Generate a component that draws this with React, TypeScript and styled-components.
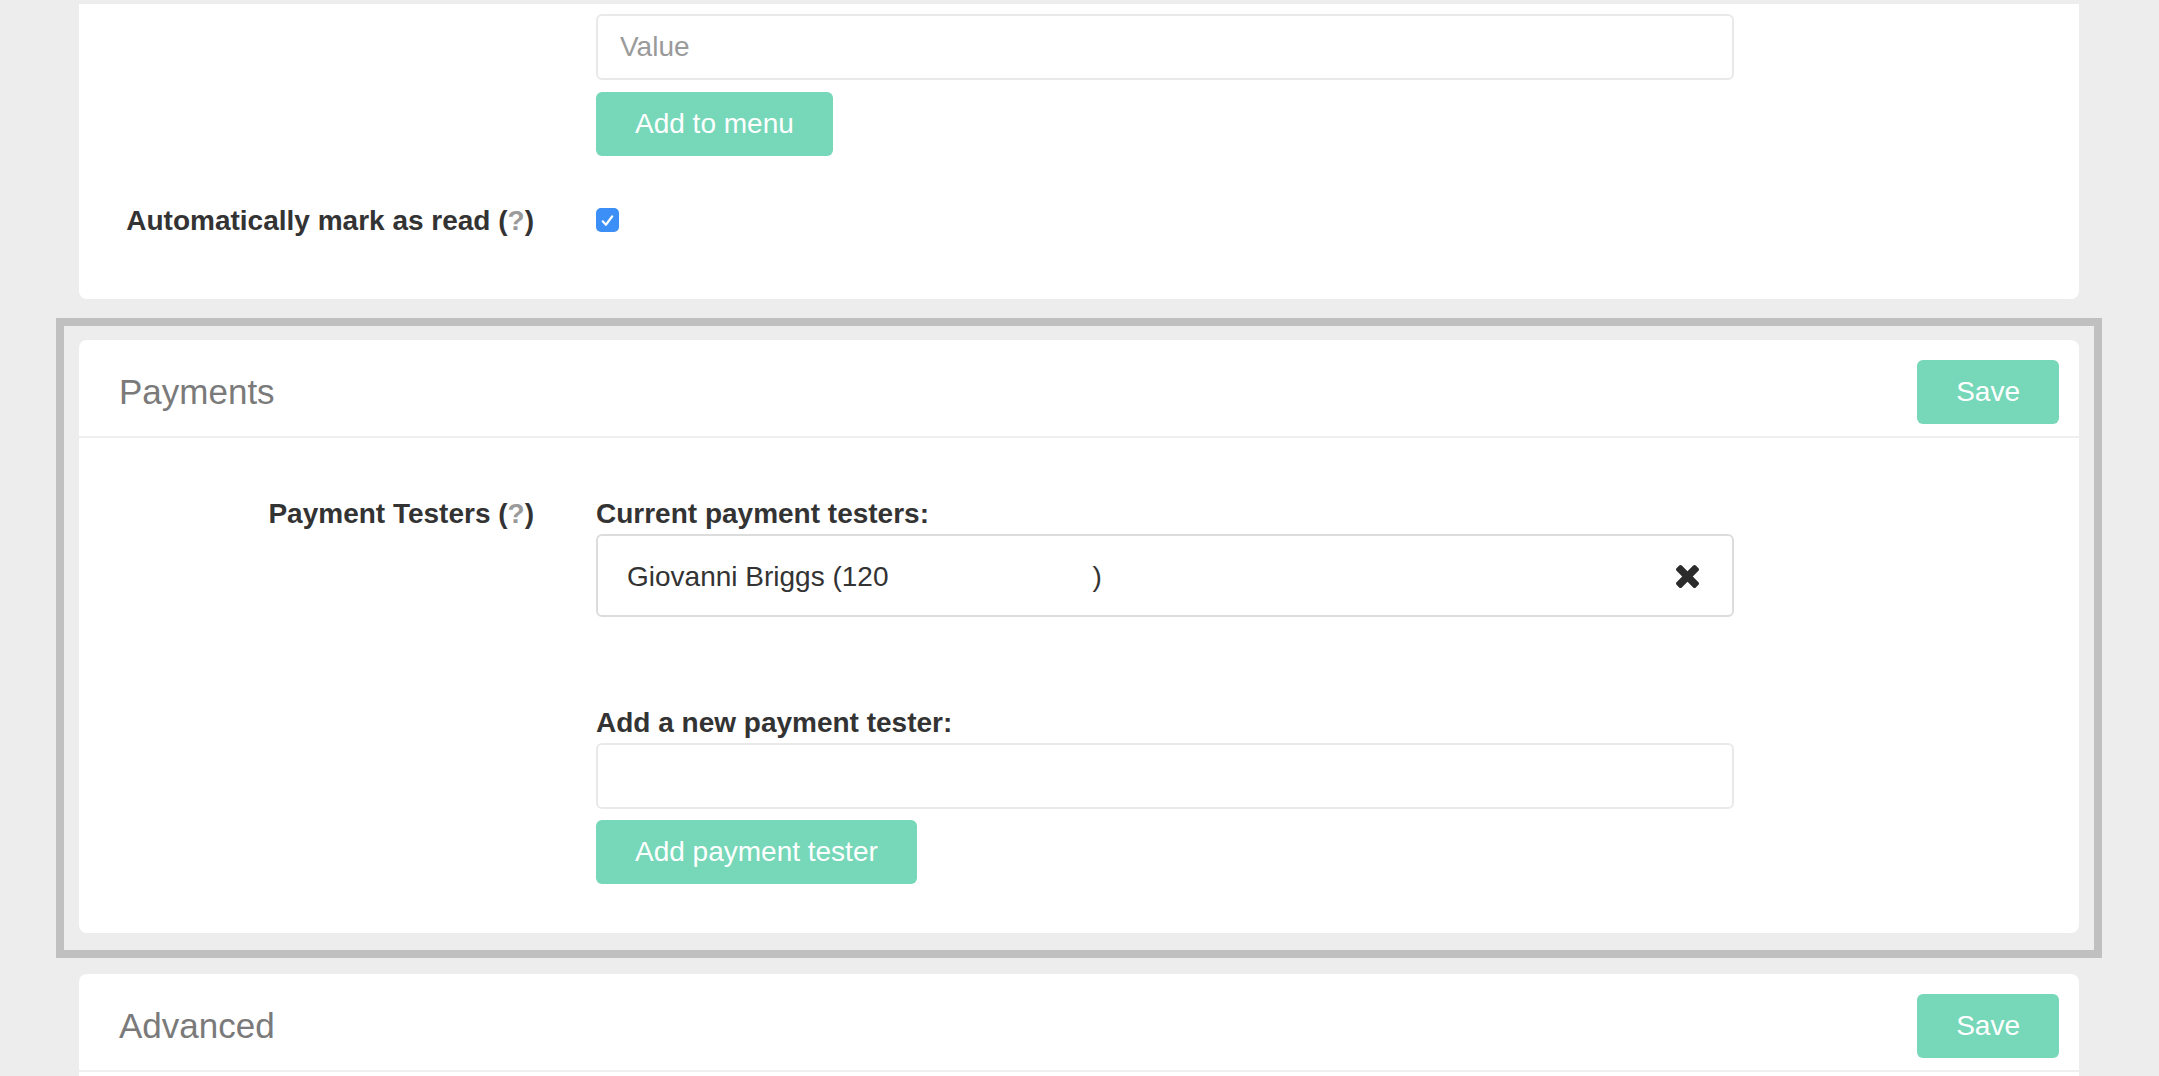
import React from "react";
import styled, { createGlobalStyle } from "styled-components";

const GlobalStyle = createGlobalStyle`
  html, body {
    margin: 0;
    padding: 0;
    background: #ededed;
    overflow: hidden;
  }
  body {
    font-family: "Liberation Sans", Arial, Helvetica, sans-serif;
    color: #333;
  }
  *, *::before, *::after { box-sizing: border-box; }
`;

const Page = styled.main`
  width: 2000px;
  margin: 0 80px 0 79px;
  padding-top: 4px;
  display: flex;
  flex-direction: column;
  gap: 41px;
`;

const Card = styled.section<{ $flatTop?: boolean }>`
  background: #fff;
  border-radius: ${(p) => (p.$flatTop ? "0 0 8px 8px" : "8px")};
`;

const Highlight = styled.div`
  border: 8px solid #c0c0c0;
  padding: 14px 15px 17px 15px;
  margin: -22px -23px -25px -23px;
  background: #ededed;
`;

const Header = styled.header`
  display: flex;
  align-items: center;
  justify-content: space-between;
  padding: 20px 20px 12px 40px;
  border-bottom: 2px solid #efefef;
`;

const Title = styled.h2`
  margin: 0;
  font-size: 35px;
  font-weight: 300;
  line-height: 64px;
  color: #7a7a7a;
`;

const Button = styled.button<{ $mt?: number }>`
  height: 64px;
  padding: 0 39px;
  margin-top: ${(p) => p.$mt ?? 0}px;
  border: 0;
  border-radius: 6px;
  background: #76d7b9;
  color: #fff;
  font-family: inherit;
  font-size: 28px;
  cursor: pointer;
  white-space: nowrap;
`;

const Body = styled.div<{ $pt: number; $pb: number; $minH?: number }>`
  padding: ${(p) => p.$pt}px 0 ${(p) => p.$pb}px;
  min-height: ${(p) => p.$minH ?? 0}px;
  display: flex;
  flex-direction: column;
`;

const Row = styled.div<{ $mt?: number }>`
  display: grid;
  grid-template-columns: 455px 1138px;
  column-gap: 62px;
  margin-top: ${(p) => p.$mt ?? 0}px;
`;

const Label = styled.div`
  text-align: right;
  font-weight: bold;
  font-size: 28px;
  line-height: 40px;
  color: #333;
`;

const Q = styled.span`
  color: #9a9a9a;
`;

const Controls = styled.div`
  display: flex;
  flex-direction: column;
  align-items: flex-start;
`;

const CheckCell = styled.div`
  display: flex;
  align-items: center;
  height: 40px;
  padding-bottom: 2px;
`;

const FieldLabel = styled.div<{ $mt?: number }>`
  font-weight: bold;
  font-size: 28px;
  line-height: 40px;
  color: #333;
  margin-top: ${(p) => p.$mt ?? 0}px;
`;

const TextInput = styled.input`
  width: 100%;
  height: 66px;
  border: 2px solid #e9e9e9;
  border-radius: 6px;
  padding: 0 22px;
  font-family: inherit;
  font-size: 28px;
  color: #333;
  outline: none;
  &::placeholder { color: #9a9a9a; }
`;

const Checkbox = styled.span`
  width: 23px;
  height: 24px;
  border-radius: 5px;
  background: #3b8ff6;
  display: inline-flex;
  align-items: center;
  justify-content: center;
`;

const TesterChip = styled.div`
  width: 100%;
  height: 83px;
  border: 2px solid #dcdcdc;
  border-radius: 6px;
  padding: 2px 33px 0 29px;
  display: flex;
  align-items: center;
  justify-content: space-between;
  font-size: 28px;
  line-height: 40px;
  color: #333;
`;

const TesterName = styled.span`
  white-space: pre;
`;

const Redacted = styled.span`
  display: inline-block;
  width: 204px;
`;

const RemoveIcon = styled.svg`
  width: 23px;
  height: 23px;
  fill: #2b2b2b;
  flex: none;
`;

function Help() {
  return (
    <>
      {" "}(<Q>?</Q>)
    </>
  );
}

export default function App() {
  return (
    <>
      <GlobalStyle />
      <Page>
        <Card $flatTop>
          <Body $pt={10} $pb={58}>
            <Row>
              <div />
              <Controls>
                <TextInput placeholder="Value" />
                <Button $mt={12}>Add to menu</Button>
              </Controls>
            </Row>
            <Row $mt={45}>
              <Label>
                Automatically mark as read<Help />
              </Label>
              <CheckCell>
                <Checkbox>
                  <svg width="17" height="17" viewBox="0 0 16 16">
                    <path d="M3.5 8.8l3 3.2L12.5 4" fill="none" stroke="#fff" strokeWidth="2" strokeLinecap="round" strokeLinejoin="round" />
                  </svg>
                </Checkbox>
              </CheckCell>
            </Row>
          </Body>
        </Card>

        <Highlight>
          <Card>
            <Header>
              <Title>Payments</Title>
              <Button>Save</Button>
            </Header>
            <Body $pt={56} $pb={49}>
              <Row>
                <Label>
                  Payment Testers<Help />
                </Label>
                <Controls>
                  <FieldLabel>Current payment testers:</FieldLabel>
                  <TesterChip>
                    <TesterName>
                      Giovanni Briggs (120<Redacted />)
                    </TesterName>
                    <RemoveIcon viewBox="302 366 1188 1188">
                      <path d="M1490 1322q0 40-28 68l-136 136q-28 28-68 28t-68-28l-294-294-294 294q-28 28-68 28t-68-28l-136-136q-28-28-28-68t28-68l294-294-294-294q-28-28-28-68t28-68l136-136q28-28 68-28t68 28l294 294 294-294q28-28 68-28t68 28l136 136q28 28 28 68t-28 68l-294 294 294 294q28 28 28 68z" />
                    </RemoveIcon>
                  </TesterChip>
                  <FieldLabel $mt={86}>Add a new payment tester:</FieldLabel>
                  <TextInput />
                  <Button $mt={11}>Add payment tester</Button>
                </Controls>
              </Row>
            </Body>
          </Card>
        </Highlight>

        <Card>
          <Header>
            <Title>Advanced</Title>
            <Button>Save</Button>
          </Header>
          <Body $pt={56} $pb={49} $minH={300} />
        </Card>
      </Page>
    </>
  );
}
